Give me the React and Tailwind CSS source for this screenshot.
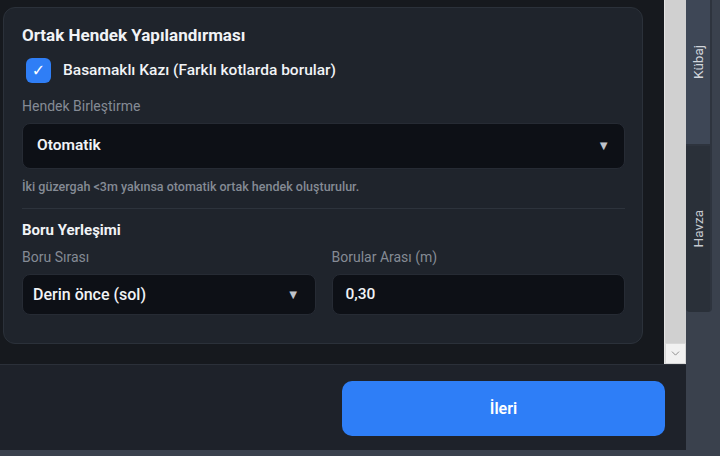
import { ChevronDown } from "lucide-react";

export default function App() {
  return (
    <div
      className="flex h-[456px] w-[720px] overflow-hidden bg-[#3a414d] text-[#f1f3f6]"
      style={{ fontFamily: "Roboto, 'Noto Sans', sans-serif" }}
    >
      <div className="flex w-[686px] flex-col">
        {/* scroll area */}
        <div className="flex h-[364px] bg-[#16191e]">
          <div className="flex-1 pl-[3px] pr-[21px] pt-[7px]">
            <div className="rounded-xl border border-[#2b313a] bg-[#1f242c] pb-[28px] pl-[18px] pr-[17px] pt-[16px]">
              <h2 className="text-[17px] font-bold leading-[22px]">Ortak Hendek Yapılandırması</h2>

              <label className="ml-1 mt-3 flex items-center gap-3">
                <span className="flex h-[25px] w-[25px] items-center justify-center rounded-md bg-[#2f7ef6] text-[16px] font-bold text-white" style={{ fontFamily: "'DejaVu Sans', sans-serif" }}>
                  ✓
                </span>
                <span className="text-[15.5px] font-medium">Basamaklı Kazı (Farklı kotlarda borular)</span>
              </label>

              <div className="mt-[14px] text-[14px] leading-[18px] text-[#858b95]">Hendek Birleştirme</div>
              <div className="mt-2 flex h-[46px] items-center justify-between rounded-lg border border-[#262b34] bg-[#0d1016] pl-[14px] pr-[14px]">
                <span className="text-[15.5px] font-semibold">Otomatik</span>
                <span className="text-[13px] text-[#bfc3ca]">▼</span>
              </div>
              <p className="mt-[10px] text-[12.5px] font-medium leading-4 text-[#858b95]">
                İki güzergah &lt;3m yakınsa otomatik ortak hendek oluşturulur.
              </p>

              <div className="mt-[13px] h-px bg-[#2d333c]" />

              <h3 className="mt-[11px] text-[15px] font-bold leading-5">Boru Yerleşimi</h3>
              <div className="mt-2 grid grid-cols-2 gap-4">
                <div>
                  <div className="text-[14px] leading-[18px] text-[#858b95]">Boru Sırası</div>
                  <div className="mt-2 flex h-[41px] items-center justify-between rounded-lg border border-[#262b34] bg-[#0d1016] pl-[10px] pr-[15px]">
                    <span className="text-[16px] font-medium">Derin önce (sol)</span>
                    <span className="text-[13px] text-[#bfc3ca]">▼</span>
                  </div>
                </div>
                <div>
                  <div className="text-[14px] leading-[18px] text-[#858b95]">Borular Arası (m)</div>
                  <div className="mt-2 flex h-[41px] items-center rounded-lg border border-[#262b34] bg-[#0d1016] pl-[13px]">
                    <span className="text-[15.5px] font-medium">0,30</span>
                  </div>
                </div>
              </div>
            </div>
          </div>

          {/* scrollbar */}
          <div className="flex w-[22px] flex-col border-l border-[#e4e4e4] bg-[#d0d0d0]">
            <div className="flex-1" />
            <div className="flex h-[21px] items-center justify-center border border-[#d8d8d8] bg-[#f1f1f1]">
              <ChevronDown size={13} strokeWidth={1.5} className="text-[#7a7a7a]" />
            </div>
          </div>
        </div>

        {/* footer */}
        <div className="flex h-[86px] justify-end border-t border-[#2b3039] bg-[#1e222a] pr-[21px] pt-4">
          <button className="h-[55px] w-[323px] rounded-[10px] bg-[#2e7ef7] text-[16px] font-semibold text-white">
            İleri
          </button>
        </div>
      </div>

      {/* side tabs */}
      <div className="flex w-[34px] flex-col">
        <div className="-mt-5 flex h-[166px] w-[26px] shrink-0 items-center justify-center border-b-2 border-r-2 border-[#2e343e] bg-[#3e4756]">
          <span className="rotate-180 text-[13.5px] text-[#d2d6dc] [writing-mode:vertical-rl]">Kübaj</span>
        </div>
        <div className="flex h-[166px] w-[26px] shrink-0 items-center justify-center rounded-b-sm border-r-2 border-[#2e343e] bg-[#2a3039]">
          <span className="rotate-180 text-[13.5px] text-[#c5c9d0] [writing-mode:vertical-rl]">Havza</span>
        </div>
      </div>
    </div>
  );
}
